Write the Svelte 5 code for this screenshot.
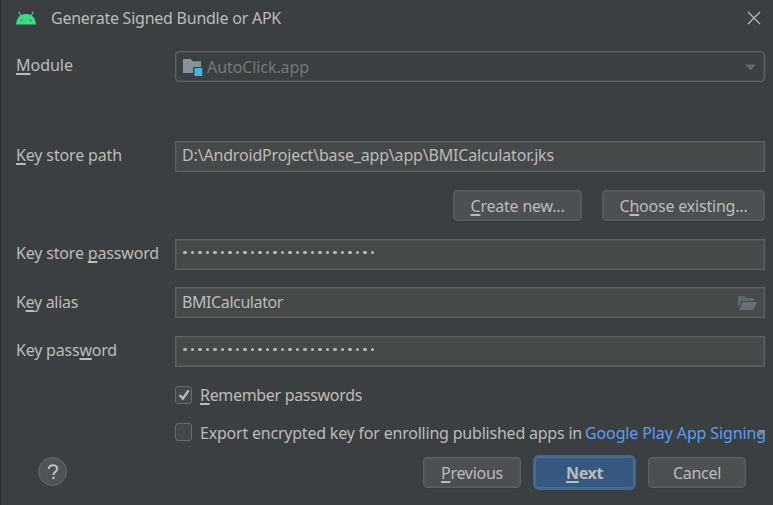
<script>
  const dots = Array.from({ length: 26 });

  // Spreads the glyphs evenly so that the text takes the given advance width.
  function fit(node, width) {
    const n = node.textContent.length;
    const natural = node.getBoundingClientRect().width;
    node.style.letterSpacing = `${(width - natural) / n}px`;
  }
</script>

<div class="dialog">
  <header>
    <svg class="android" width="20" height="14" viewBox="0 0 20 14">
      <path d="M4.6 4.6 2.8 1M15.4 4.6 17.2 1" stroke="#3ddc84" stroke-width="1.1" stroke-linecap="round" />
      <path d="M0 13.6C.3 9.4 2.2 5.6 5.2 4 8 2.5 12 2.5 14.8 4 17.8 5.6 19.7 9.4 20 13.6Z" fill="#3ddc84" />
      <circle cx="5.4" cy="9.4" r=".85" fill="#2c6e49" />
      <circle cx="14.6" cy="9.4" r=".85" fill="#2c6e49" />
    </svg>
    <h1><span use:fit={230}>Generate Signed Bundle or APK</span></h1>
    <svg class="close" width="14" height="14" viewBox="0 0 14 14">
      <path d="M1 1 13 13M13 1 1 13" stroke="#bbb" stroke-width="1.2" />
    </svg>
  </header>

  <div class="row module">
    <label for="module"><span use:fit={57}><u>M</u>odule</span></label>
    <div class="combo" id="module">
      <svg class="folder" width="20" height="19" viewBox="0 0 20 19">
        <path d="M0 1H7.5L10 3.3H18V9H10V15H0Z" fill="#87939a" />
        <rect x="11.5" y="10" width="7.7" height="8" fill="#40b6e0" />
      </svg>
      <span use:fit={102}>AutoClick.app</span>
      <svg class="arrow" width="11" height="7" viewBox="0 0 11 7"><path d="M0 .5H11L5.5 6.5Z" fill="#64676a" /></svg>
    </div>
  </div>

  <div class="row path">
    <label for="path"><span use:fit={106}><u>K</u>ey store path</span></label>
    <div class="field" id="path"><span class="raised" use:fit={372}>D:\AndroidProject\base_app\app\BMICalculator.jks</span></div>
  </div>

  <div class="store-actions">
    <button class="create"><span use:fit={94}><u>C</u>reate new...</span></button>
    <button class="choose"><span use:fit={128}>C<u>h</u>oose existing...</span></button>
  </div>

  <div class="row store-password">
    <label for="sp"><span use:fit={143}>Key store <u>p</u>assword</span></label>
    <div class="field" id="sp"><div class="dots">{#each dots as _}<i></i>{/each}</div></div>
  </div>

  <div class="row alias">
    <label for="alias"><span use:fit={62}>K<u>e</u>y alias</span></label>
    <div class="field" id="alias">
      <span use:fit={101}>BMICalculator</span>
      <svg class="open" width="19" height="15" viewBox="0 0 19 15">
        <path d="M0 0H6.5L8.5 2H16V5H3.8L0 12Z" fill="#5d686c" />
        <path d="M4.6 6H19L15.2 14H1Z" fill="#657075" />
      </svg>
    </div>
  </div>

  <div class="row key-password">
    <label for="kp"><span use:fit={101}>Key pass<u>w</u>ord</span></label>
    <div class="field" id="kp"><div class="dots">{#each dots as _}<i></i>{/each}</div></div>
  </div>

  <div class="check remember">
    <div class="box">
      <svg width="16" height="16" viewBox="0 0 16 16"><path d="M3.6 8 6.9 11.6 12.6 3.4" fill="none" stroke="#bbb" stroke-width="2.4" /></svg>
    </div>
    <span use:fit={162}><u>R</u>emember passwords</span>
  </div>
  <div class="check export">
    <div class="box"></div>
    <span class="text" use:fit={382}>Export encrypted key for enrolling published apps in</span>
    <a class="text" href="#signing"><span use:fit={181}>Google Play App Signing</span><svg class="ext" width="8" height="8" viewBox="0 0 8 8"><path d="M1 1H7V7L5 5 2 7.5 1 5.5 3 3Z" fill="#9aa0a6" opacity=".65" /></svg></a>
  </div>

  <footer>
    <div class="help">
      <svg width="16" height="18" viewBox="0 0 16 18">
        <path d="M3.9 6.1C3.9 3.5 5.6 2.2 8 2.2S12.2 3.6 12.2 5.8C12.2 8.8 8.5 8.6 8.5 12" fill="none" stroke="#bbb" stroke-width="2.1" />
        <rect x="7.3" y="13.7" width="2.4" height="2.4" fill="#bbb" />
      </svg>
    </div>
    <button class="previous"><span use:fit={62}><u>P</u>revious</span></button>
    <button class="next"><span use:fit={37}><u>N</u>ext</span></button>
    <button class="cancel"><span use:fit={48}>Cancel</span></button>
  </footer>
</div>

<style>
  :global(body) { background: #3c3f41; }
  .dialog {
    box-sizing: border-box;
    width: 773px;
    height: 505px;
    overflow: hidden;
    background: #3c3f41;
    border-left: 1px solid #2b2b2b;
    padding-left: 15px;
    color: #bbb;
    font: 16px/30px "Noto Sans", "Open Sans", sans-serif;
    white-space: nowrap;
  }
  svg { display: block; flex: none; }
  u {
    text-decoration: underline;
    text-decoration-thickness: 1.5px;
    text-underline-offset: 2px;
    text-decoration-skip-ink: none;
  }
  header { display: flex; align-items: center; height: 36px; }
  h1 { margin: 0 auto 0 15px; font-size: 16px; font-weight: 400; }
  .close { margin-right: 12px; }

  .row { display: flex; height: 31px; }
  .row label { width: 159px; flex: none; line-height: 28px; }
  .field, .combo {
    box-sizing: border-box;
    width: 590px;
    height: 31px;
    display: flex;
    align-items: center;
    border: 1px solid #5e6262;
    box-shadow: inset 0 0 0 1px #4e5253;
    background: #45494a;
    padding: 0 6px 2px;
    line-height: 26px;
  }
  .combo {
    background: #3c3f41;
    border-color: #616365;
    box-shadow: inset 0 0 0 1px #484b4c;
    border-radius: 4px;
    color: #777;
    padding: 1px 8px 0 7px;
  }
  .folder { margin: 1px 4px 0 0; }
  .arrow { margin-left: auto; }
  .open { margin: 3px 1px 0 auto; }
  .raised { padding-bottom: 2px; }
  .dots { display: flex; gap: 4.03px; padding: 0 0 2px 1px; }
  .dots i { width: 3.5px; height: 3.5px; border-radius: 50%; background: #bbb; }

  .module { margin-top: 15px; }
  .path { margin-top: 59px; }
  .store-password { margin-top: 18px; }
  .alias { margin-top: 17px; }
  .alias label { line-height: 30px; }
  .key-password { margin-top: 18px; }

  button {
    box-sizing: border-box;
    height: 31px;
    padding: 0;
    border: 1px solid #5e6060;
    border-radius: 4px;
    background: #4c5052;
    color: #bbb;
    font: inherit;
    line-height: 28px;
    box-shadow: inset 0 0 0 1px #525657, 0 1px 1px #35383a;
  }
  .store-actions { display: flex; justify-content: flex-end; gap: 20px; margin: 18px 8px 0 0; }
  .create { width: 129px; }
  .choose { width: 163px; }

  .check { display: flex; align-items: center; height: 18px; margin-left: 159px; }
  .remember { margin-top: 19px; }
  .export { margin-top: 19px; }
  .export .text { padding-top: 2px; }
  .box {
    box-sizing: border-box;
    width: 17px;
    height: 18px;
    flex: none;
    display: flex;
    justify-content: center;
    margin-right: 8px;
    border: 1px solid #6b6b6b;
    border-radius: 3px;
    background: #43494a;
  }
  a { position: relative; margin-left: 3px; color: #589df6; text-decoration: none; }
  .ext { position: absolute; right: 1px; top: 13px; }

  footer { display: flex; align-items: center; height: 35px; margin: 14px 27px 0 22px; }
  .help {
    box-sizing: border-box;
    width: 29px;
    height: 29px;
    display: flex;
    align-items: center;
    justify-content: center;
    margin: 0 auto 2px 0;
    border: 1px solid #666969;
    border-radius: 50%;
    background: #4f5355;
  }
  .previous, .cancel { width: 98px; }
  .next {
    width: 103px;
    height: 35px;
    margin: 0 12px;
    border: 2px solid #43698f;
    border-radius: 6px;
    background: #365880;
    box-shadow: inset 0 0 0 1px #4c708c;
    font-weight: 700;
  }
</style>
